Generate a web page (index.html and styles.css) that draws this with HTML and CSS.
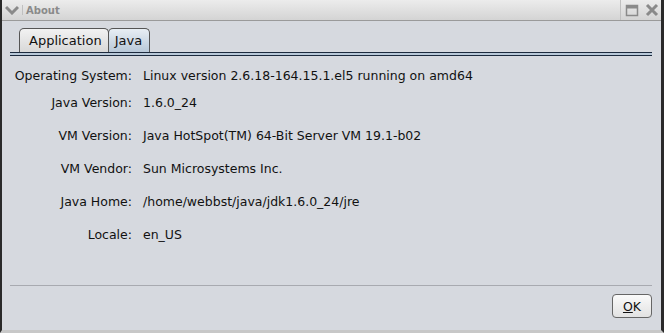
FILE: index.html
```html
<!DOCTYPE html>
<html lang="en">
<head>
    <meta charset="UTF-8">
    <title>About</title>
    <link rel="stylesheet" href="styles.css">
</head>
<body>
    <div class="window">
        <div class="titlebar">
            <svg class="menu-icon" width="14" height="10" viewBox="0 0 14 10">
                <path d="M1 2 L7 8 L13 2" fill="none" stroke="#8a8a8a" stroke-width="3"/>
            </svg>
            <span class="title">About</span>
            <div class="title-buttons">
                <svg width="14" height="14" viewBox="0 0 14 14">
                    <rect x="1.5" y="2.5" width="11" height="10" fill="none" stroke="#8a8a8a" stroke-width="1.5"/>
                    <rect x="1.5" y="2.5" width="11" height="3" fill="#8a8a8a"/>
                </svg>
                <svg width="14" height="14" viewBox="0 0 14 14">
                    <path d="M2 2 L12 12 M12 2 L2 12" stroke="#8a8a8a" stroke-width="3"/>
                </svg>
            </div>
        </div>
        <div class="content">
            <div class="tabs">
                <div class="tab">Application</div>
                <div class="tab active">Java</div>
            </div>
            <div class="tab-rule"></div>
            <div class="props">
                <div class="row first"><span class="label">Operating System:</span><span class="value">Linux version 2.6.18-164.15.1.el5 running on amd64</span></div>
                <div class="row"><span class="label">Java Version:</span><span class="value">1.6.0_24</span></div>
                <div class="row"><span class="label">VM Version:</span><span class="value">Java HotSpot(TM) 64-Bit Server VM 19.1-b02</span></div>
                <div class="row"><span class="label">VM Vendor:</span><span class="value">Sun Microsystems Inc.</span></div>
                <div class="row"><span class="label">Java Home:</span><span class="value">/home/webbst/java/jdk1.6.0_24/jre</span></div>
                <div class="row"><span class="label">Locale:</span><span class="value">en_US</span></div>
            </div>
            <div class="separator"></div>
            <div class="buttons">
                <button class="ok-btn"><u>O</u>K</button>
            </div>
        </div>
    </div>
</body>
</html>
```

FILE: styles.css
```css
body {
    margin: 0;
    padding: 0;
    font-family: "DejaVu Sans", sans-serif;
    background: #ffffff;
}
.window {
    width: 664px;
    height: 333px;
    box-sizing: border-box;
    background: #d6d9df;
    border-left: 2px solid #2a2a2a;
    border-right: 3px solid #2a2a2a;
    border-bottom: 3px solid #c8c8c8;
    display: flex;
    flex-direction: column;
}
.titlebar {
    height: 20px;
    background: linear-gradient(#ececec, #d4d4d4);
    border-bottom: 1px solid #9a9a9a;
    display: flex;
    align-items: center;
    padding-left: 3px;
    padding-right: 2px;
}
.menu-icon {
    margin-right: 3px;
    padding-right: 3px;
    border-right: 1px solid #c0c0c0;
}
.title {
    font-size: 10px;
    font-weight: bold;
    color: #8a8a8a;
    flex: 1;
}
.title-buttons {
    display: flex;
    gap: 6px;
    padding-left: 4px;
    border-left: 1px solid #c0c0c0;
    height: 20px;
    align-items: center;
}
.content {
    flex: 1;
    padding: 0 7px 0 8px;
    display: flex;
    flex-direction: column;
}
.tabs {
    display: flex;
    padding-left: 9px;
    margin-top: 7px;
}
.tab {
    font-size: 13px;
    line-height: 16px;
    color: #111;
    padding: 4px 6px 3px 9px;
    border: 1px solid #555;
    border-bottom: none;
    border-radius: 5px 5px 0 0;
    background: linear-gradient(#f2f2f2, #d8d8d8);
}
.tab.active {
    background: linear-gradient(#e8eef4, #b8c8d8);
    padding: 4px 7px 3px 6px;
    margin-left: -1px;
}
.tab-rule {
    height: 2px;
    border-top: 1px solid #1c2a3e;
    border-bottom: 1px solid #1c2a3e;
    background: #b8c8d8;
    margin-right: 2px;
}
.props {
    flex: 1;
    font-size: 12.5px;
    color: #111;
}
.row {
    display: flex;
    margin-top: 16px;
    line-height: 17px;
}
.row.first {
    margin-top: 11px;
    margin-bottom: -6px;
}
.label {
    width: 122px;
    text-align: right;
    padding-right: 11px;
}
.separator {
    height: 0;
    border-top: 1px solid #a8aab0;
    margin-bottom: 8px;
    margin-right: 2px;
}
.buttons {
    display: flex;
    justify-content: flex-end;
    padding-bottom: 12px;
}
.ok-btn {
    width: 40px;
    height: 24px;
    font-family: "DejaVu Sans", sans-serif;
    font-size: 12.5px;
    color: #111;
    background: linear-gradient(#fafafa, #e2e2e2);
    border: 1px solid #666;
    border-radius: 4px;
    padding: 0;
    margin-right: 2px;
}
```
